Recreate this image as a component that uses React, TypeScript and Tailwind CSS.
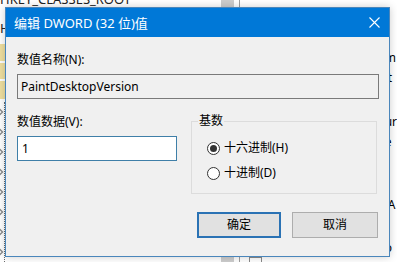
import { Fragment } from 'react';

const valueFragments = [
    { text: 'm', gap: 'mt-[50px]' },
    { text: 'it', gap: 'mt-[4px]' },
    { text: 'ur', gap: 'mt-[28px]' },
    { text: 'e', gap: 'mt-[4px]' },
    { text: ':A', gap: 'mt-[47px]' },
    { text: 'o', gap: 'mt-[27px]' },
];

function Chevron() {
    return (
        <svg width="7" height="20" viewBox="0 0 7 20" className="-ml-[2px]">
            <path d="M1 6.5L4.5 10L1 13.5" fill="none" stroke="#8a8a8a" strokeWidth="1.4" />
        </svg>
    );
}

function Radio({ checked, label }: { checked?: boolean; label: string }) {
    return (
        <div className="flex h-[16px] items-center">
            <span className="flex h-[13px] w-[13px] items-center justify-center rounded-full border border-[#333333] bg-white">
                {checked && <span className="h-[7px] w-[7px] rounded-full bg-[#333333]" />}
            </span>
            <span className="ml-[4px]">{label}</span>
        </div>
    );
}

function RegistryBehind() {
    return (
        <div className="flex h-full">
            {/* key tree */}
            <div className="flex h-full w-[245px]">
                <div className="flex flex-1 flex-col">
                    <div className="-mt-[9px] text-[13px] leading-[16px] text-[#222]">HKEY_CLASSES_ROOT</div>
                    <div className="mt-[13px] text-[13px] leading-[16px] text-[#222]">H</div>
                    <div className="mt-[8px] flex w-[20px] flex-col gap-[2px]">
                        <div className="h-[17px] bg-[#efdf9f]" />
                        <div className="h-[16px] bg-[#efdf9f]" />
                        <div className="h-[18px] bg-[#efdf9f]" />
                    </div>
                    <div className="mt-[3px] flex w-[5px] flex-1 flex-col border-r border-dotted border-[#6a6a6a]">
                        {[0, 1, 2, 3, 4, 5, 6, 7].map((i) => (
                            <Fragment key={i}>
                                <Chevron />
                            </Fragment>
                        ))}
                    </div>
                    <div className="ml-[8px] h-[6px] w-[22px] bg-[#f1e2a8]" />
                </div>
                <div className="w-[13px] bg-[#cdcdcd]" />
                <div className="w-[5px]" />
            </div>
            <div className="w-px bg-[#a0a0a0]" />
            {/* value list */}
            <div className="flex flex-1">
                <div className="flex w-[145px] flex-col">
                    <div className="mb-[-7px] ml-[9px] mt-auto h-[12px] w-[13px] border border-[#8a8a8a]" />
                </div>
                <div className="flex flex-col leading-[16px]">
                    {valueFragments.map((v) => (
                        <div key={v.text} className={v.gap}>{v.text}</div>
                    ))}
                </div>
            </div>
        </div>
    );
}

export default function App() {
    return (
        <div className="relative h-[262px] w-[397px] overflow-hidden bg-white font-['Noto_Sans','Noto_Sans_CJK_SC',sans-serif] text-[12px] leading-[16px] text-black">
            <RegistryBehind />

            {/* edit dialog */}
            <div className="absolute left-[5px] top-[7px] flex h-[250px] w-[385px] flex-col border border-[#4a86bb] bg-[#f0f0f0] shadow-[0_0_8px_rgba(0,0,0,0.2)]">
                <div className="flex h-[29px] shrink-0 items-center bg-[#0078d7] pl-[8px] pr-[9px] text-[13px] text-white">
                    <span>编辑 DWORD (32 位)值</span>
                    <svg width="11" height="11" viewBox="0 0 11 11" className="ml-auto">
                        <path d="M0.5 0.5L10.5 10.5M10.5 0.5L0.5 10.5" stroke="white" strokeWidth="1.1" />
                    </svg>
                </div>

                <div className="flex flex-1 flex-col pl-[11px] pr-[10px] pt-[15px]">
                    <div>数值名称(N):</div>
                    <div className="mt-[6px] flex h-[25px] items-center border border-[#7a7a7a] pl-[3px]">
                        PaintDesktopVersion
                    </div>

                    <div className="mt-[15px] flex">
                        <div className="w-[160px]">
                            <div>数值数据(V):</div>
                            <div className="mt-[6px] flex h-[25px] items-center border border-[#3f7fa8] bg-white pl-[4px]">
                                1
                            </div>
                        </div>
                        <fieldset className="ml-[14px] w-[186px] border border-[#dcdcdc] pb-[12px] pl-[6px]">
                            <legend className="px-px leading-[14px]">基数</legend>
                            <div className="pl-[9px]">
                                <div className="mt-[12px]">
                                    <Radio checked label="十六进制(H)" />
                                </div>
                                <div className="mt-[9px]">
                                    <Radio label="十进制(D)" />
                                </div>
                            </div>
                        </fieldset>
                    </div>

                    <div className="mt-[18px] flex justify-end gap-[11px] pr-px">
                        <button className="flex h-[26px] w-[84px] items-center justify-center border-2 border-[#2a72b4] bg-[#e1e1e1]">
                            确定
                        </button>
                        <button className="flex h-[26px] w-[86px] items-center justify-center border border-[#adadad] bg-[#e1e1e1]">
                            取消
                        </button>
                    </div>
                </div>
            </div>
        </div>
    );
}
